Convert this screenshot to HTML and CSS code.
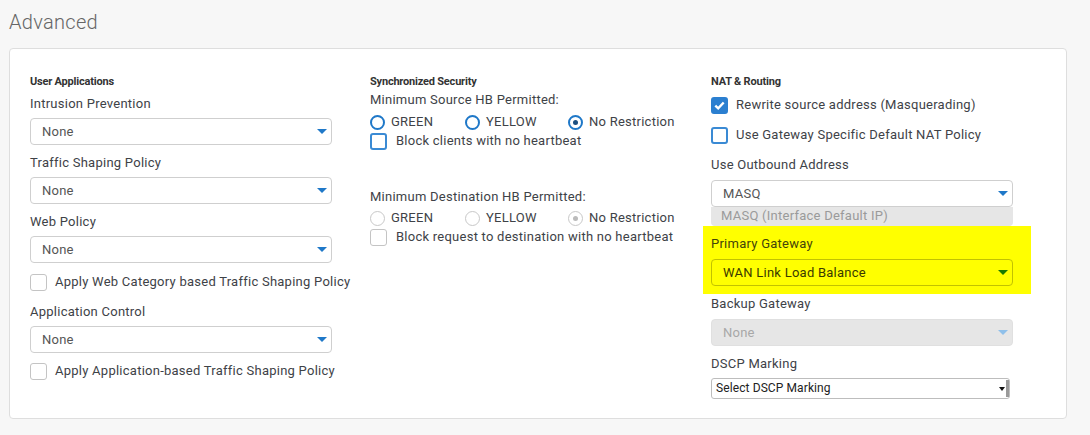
FILE: index.html
```html
<!DOCTYPE html>
<html lang="en">
<head>
  <meta charset="UTF-8" />
  <title>Advanced</title>
  <link rel="stylesheet" href="styles.css">
</head>
<body>
  <h2 class="page-title">Advanced</h2>

  <div class="card">
    <!-- user applications -->
    <div class="col">
      <h4 class="section-title">User Applications</h4>

      <div class="field">
        <label class="field-label">Intrusion Prevention</label>
        <div class="select"><span>None</span><i class="caret"></i></div>
      </div>
      <div class="field">
        <label class="field-label">Traffic Shaping Policy</label>
        <div class="select"><span>None</span><i class="caret"></i></div>
      </div>
      <div class="field">
        <label class="field-label">Web Policy</label>
        <div class="select"><span>None</span><i class="caret"></i></div>
      </div>
      <label class="check check-web"><span class="box"></span>Apply Web Category based Traffic Shaping Policy</label>
      <div class="field field-app">
        <label class="field-label">Application Control</label>
        <div class="select"><span>None</span><i class="caret"></i></div>
      </div>
      <label class="check check-app"><span class="box"></span>Apply Application-based Traffic Shaping Policy</label>
    </div>

    <!-- synchronized security -->
    <div class="col">
      <h4 class="section-title">Synchronized Security</h4>
      <div class="hb-label">Minimum Source HB Permitted:</div>
      <div class="radio-row">
        <label class="radio r-green"><span class="dot"></span>GREEN</label>
        <label class="radio r-yellow"><span class="dot"></span>YELLOW</label>
        <label class="radio"><span class="dot on"></span>No Restriction</label>
      </div>
      <label class="check check-hb"><span class="box blue"></span>Block clients with no heartbeat</label>

      <div class="hb-label hb-dest">Minimum Destination HB Permitted:</div>
      <div class="radio-row disabled">
        <label class="radio r-green"><span class="dot"></span>GREEN</label>
        <label class="radio r-yellow"><span class="dot"></span>YELLOW</label>
        <label class="radio"><span class="dot on"></span>No Restriction</label>
      </div>
      <label class="check check-hb"><span class="box"></span>Block request to destination with no heartbeat</label>
    </div>

    <!-- nat & routing -->
    <div class="col col-nat">
      <h4 class="section-title">NAT &amp; Routing</h4>
      <label class="check check-nat1">
        <span class="box blue checked">
          <svg width="11" height="9" viewBox="0 0 11 9"><path d="M1.3 4.6 L4.2 7.3 L9.7 1.5" fill="none" stroke="#fff" stroke-width="2.4"/></svg>
        </span>Rewrite source address (Masquerading)
      </label>
      <label class="check check-nat2"><span class="box blue"></span>Use Gateway Specific Default NAT Policy</label>

      <div class="field field-outbound">
        <label class="field-label">Use Outbound Address</label>
        <div class="select"><span>MASQ</span><i class="caret"></i></div>
        <div class="dropdown-hint">MASQ (Interface Default IP)</div>
      </div>

      <div class="highlight">
        <label class="field-label">Primary Gateway</label>
        <div class="select"><span>WAN Link Load Balance</span><i class="caret"></i></div>
      </div>

      <div class="field field-backup">
        <label class="field-label">Backup Gateway</label>
        <div class="select is-disabled"><span>None</span><i class="caret"></i></div>
      </div>

      <div class="field field-dscp">
        <label class="field-label">DSCP Marking</label>
        <div class="native-select"><span>Select DSCP Marking</span><i class="native-btn"></i></div>
      </div>
    </div>
  </div>
</body>
</html>
```

FILE: styles.css
```css
:root {
  --page-bg: #f7f7f7;
  --text: #3e4247;
  --muted: #9a9a9a;
  --border: #cfcfcf;
  --blue: #1f78c8;
}

body {
  margin: 0;
  padding: 0 9px;
  background: var(--page-bg);
  color: var(--text);
  font-family: Roboto, "Liberation Sans", sans-serif;
  font-size: 13px;
  letter-spacing: 0.25px;
}

.page-title {
  margin: 0;
  padding-top: 9px;
  height: 48px;
  box-sizing: border-box;
  font-size: 20px;
  font-weight: 300;
  line-height: 26px;
  color: #666;
  letter-spacing: 0.3px;
}

.card {
  width: 1058px;
  box-sizing: border-box;
  background: #fff;
  border: 1px solid #dedede;
  border-radius: 4px;
  padding: 25px 20px 19px 20px;
  display: flex;
}

.col {
  width: 340px;
  flex: none;
}

.col-nat {
  width: 330px;
  margin-left: 1px;
}

.section-title {
  margin: 0;
  font-size: 11px;
  font-weight: 700;
  line-height: 16px;
  color: #333;
  letter-spacing: -0.2px;
}

.field-label {
  display: block;
  line-height: 18px;
  margin-bottom: 5px;
}

.field {
  margin-top: 5px;
}

.field + .field {
  margin-top: 9px;
}

.select {
  position: relative;
  width: 302px;
  height: 27px;
  box-sizing: border-box;
  border: 1px solid var(--border);
  border-radius: 4px;
  padding: 0 11px;
  line-height: 25px;
  color: #555;
  background: #fff;
}

.caret {
  position: absolute;
  right: 4px;
  top: 10px;
  width: 0;
  height: 0;
  border-left: 5px solid transparent;
  border-right: 5px solid transparent;
  border-top: 5px solid var(--blue);
}

.check {
  display: flex;
  align-items: center;
  line-height: 18px;
}

.box {
  width: 15px;
  height: 15px;
  border: 1px solid #c4c4c4;
  border-radius: 3px;
  margin-right: 8px;
  flex: none;
  display: flex;
  align-items: center;
  justify-content: center;
}

.box.blue {
  border: 2px solid #3a8ad4;
  width: 13px;
  height: 13px;
}

.box.checked {
  background: #2b7fd0;
  border-color: #2b7fd0;
}

.check-web {
  margin-top: 10px;
}

.field.field-app {
  margin-top: 12px;
}

.check-app {
  margin-top: 9px;
}

.hb-label {
  line-height: 18px;
  margin-top: 1px;
}

.hb-label.hb-dest {
  margin-top: 38px;
}

.radio-row {
  display: flex;
  margin-top: 4px;
}

.radio-row.disabled {
  margin-top: 3px;
}

.radio {
  display: flex;
  align-items: center;
  line-height: 18px;
}

.r-green {
  width: 95px;
}

.r-yellow {
  width: 103px;
}

.dot {
  width: 11px;
  height: 11px;
  border: 2px solid var(--blue);
  border-radius: 50%;
  margin-right: 6px;
  position: relative;
  flex: none;
}

.dot.on::after {
  content: "";
  position: absolute;
  left: 3px;
  top: 3px;
  width: 5px;
  height: 5px;
  border-radius: 50%;
  background: #1c4f80;
}

.disabled .dot {
  width: 13px;
  height: 13px;
  border: 1px solid #c8c8c8;
}

.disabled .dot.on::after {
  left: 4px;
  top: 4px;
  background: #bbb;
}

.check-hb {
  margin-top: 1px;
}

.check-hb .box {
  margin-right: 9px;
}

.check-nat1 {
  margin-top: 6px;
}

.check-nat2 {
  margin-top: 12px;
}

.field.field-outbound {
  margin-top: 12px;
}

.field-outbound .field-label,
.highlight .field-label,
.field-backup .field-label {
  margin-bottom: 6px;
}

.dropdown-hint {
  width: 302px;
  height: 19px;
  box-sizing: border-box;
  background: #e6e6e6;
  border-radius: 0 0 4px 4px;
  padding-left: 10px;
  line-height: 18px;
  color: var(--muted);
}

.highlight {
  background: #ffff00;
  margin: 0 0 0 -8px;
  padding: 9px 18px 8px 8px;
  width: 302px;
  color: #44440a;
}

.highlight .select {
  background: transparent;
  border-color: #c2c200;
  color: #3a3a00;
}

.highlight .caret {
  border-top-color: #1a7a00;
}

.field.field-backup {
  margin-top: 1px;
}

.select.is-disabled {
  background: #e6e6e6;
  border-color: #e0e0e0;
  color: #a8a8a8;
}

.select.is-disabled .caret {
  border-top-color: #8fc0ea;
}

.field.field-dscp {
  margin-top: 9px;
}

.native-select {
  position: relative;
  width: 299px;
  height: 21px;
  box-sizing: border-box;
  border: 1px solid #bdbdbd;
  border-radius: 3px;
  padding-left: 4px;
  font-size: 12px;
  line-height: 19px;
  color: #222;
  letter-spacing: 0.1px;
}

.native-btn {
  position: absolute;
  right: 0;
  top: 1px;
  bottom: 1px;
  width: 7px;
  border-right: 3px solid #9a9a9a;
}

.native-btn::after {
  content: "";
  position: absolute;
  left: 0;
  top: 7px;
  border-left: 3px solid transparent;
  border-right: 3px solid transparent;
  border-top: 4px solid #111;
}
```
